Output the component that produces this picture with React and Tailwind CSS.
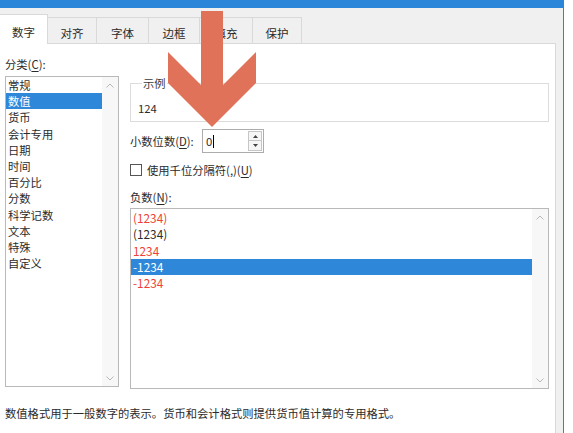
const tabs = [
  { label: "数字", w: "w-[48px]", active: true },
  { label: "对齐", w: "w-[49px]" },
  { label: "字体", w: "w-[52px]" },
  { label: "边框", w: "w-[51px]" },
  { label: "填充", w: "w-[53px]" },
  { label: "保护", w: "w-[49px]" },
];

const categories = [
  "常规",
  "数值",
  "货币",
  "会计专用",
  "日期",
  "时间",
  "百分比",
  "分数",
  "科学记数",
  "文本",
  "特殊",
  "自定义",
];

const negatives = [
  { text: "(1234)", red: true },
  { text: "(1234)" },
  { text: "1234", red: true },
  { text: "-1234", selected: true },
  { text: "-1234", red: true },
];

function Chevron({ up }) {
  return (
    <svg width="8" height="5" viewBox="0 0 8 5">
      <polyline
        points={up ? "0.5,4.5 4,1 7.5,4.5" : "0.5,0.5 4,4 7.5,0.5"}
        fill="none"
        stroke="#b8b8b8"
        strokeWidth="1"
      />
    </svg>
  );
}

function ScrollBar() {
  return (
    <div className="w-[16px] bg-[#f7f7f7] flex flex-col justify-between">
      <div className="h-[16px] flex items-center justify-center">
        <Chevron up />
      </div>
      <div className="h-[16px] flex items-center justify-center">
        <Chevron />
      </div>
    </div>
  );
}

function Key({ children }) {
  return <span className="underline underline-offset-2">{children}</span>;
}

export default function App() {
  return (
    <div className="w-[573px] h-[433px] bg-white flex overflow-hidden relative text-[#2b2b2b] font-['Noto_Sans_CJK_SC','Noto_Sans',sans-serif] text-[11.3px] leading-[16px]">
      <div className="w-[564px] flex flex-col bg-[#f0f0f0] border-r border-[#2b86d9]">
        {/* title bar edge */}
        <div className="h-[8px] bg-[#2b86d9]" />

        {/* tabs */}
        <div className="h-[35px] flex items-end">
          {tabs.map((t) =>
            t.active ? (
              <div
                key={t.label}
                className={`${t.w} h-[30px] -mb-px relative z-10 bg-white border-r border-t border-[#d9d9d9] flex justify-center pt-[9px] text-[11.5px]`}
              >
                {t.label}
              </div>
            ) : (
              <div
                key={t.label}
                className={`${t.w} h-[26px] border-r border-t border-[#d9d9d9] flex justify-center pt-[7px] text-[11.5px]`}
              >
                {t.label}
              </div>
            )
          )}
        </div>

        {/* panel */}
        <div className="flex-1 flex">
          <div className="w-[556px] bg-white border-t border-r border-[#d9d9d9] flex flex-col">
            <div className="flex items-start">
              {/* category */}
              <div className="ml-[5px] w-[114px] pt-[12px] flex flex-col">
                <div>
                  分类(<Key>C</Key>):
                </div>
                <div className="mt-[4px] h-[311px] border border-[#b9b9b9] flex">
                  <div className="flex-1 flex flex-col">
                    {categories.map((c) => (
                      <div
                        key={c}
                        className={`h-[16.2px] pl-[2px] flex items-center ${
                          c === "数值" ? "bg-[#2f87d9] text-white" : ""
                        }`}
                      >
                        {c}
                      </div>
                    ))}
                  </div>
                  <ScrollBar />
                </div>
              </div>

              {/* right side */}
              <div className="ml-[11px] w-[419px] pt-[31px] flex flex-col">
                <fieldset className="border border-[#dcdcdc] pl-[7px] pt-[9px] pb-[5px]">
                  <legend className="ml-[4px] px-[1px] text-[#3a3a3a]">示例</legend>
                  <div>124</div>
                </fieldset>

                <div className="mt-[7px] flex items-center">
                  <div className="w-[72px]">
                    小数位数(<Key>D</Key>):
                  </div>
                  <div className="w-[62px] h-[24px] border border-[#acacac] flex items-center">
                    <div className="flex-1 flex items-center pl-[3px]">
                      <span>0</span>
                      <span className="w-px h-[13px] bg-black ml-px" />
                    </div>
                    <div className="w-[14px] mr-px flex flex-col">
                      <div className="h-[10px] border border-[#c6c6c6] bg-[#f6f6f6] flex items-center justify-center">
                        <svg width="5" height="3" viewBox="0 0 5 3">
                          <polygon points="0,3 2.5,0 5,3" fill="#444" />
                        </svg>
                      </div>
                      <div className="h-[10px] border border-t-0 border-[#c6c6c6] bg-[#f6f6f6] flex items-center justify-center">
                        <svg width="5" height="3" viewBox="0 0 5 3">
                          <polygon points="0,0 2.5,3 5,0" fill="#444" />
                        </svg>
                      </div>
                    </div>
                  </div>
                </div>

                <div className="mt-[9px] h-[16px] flex items-center gap-[5px]">
                  <div className="w-[12px] h-[12px] border border-[#555] bg-white" />
                  <div>
                    使用千位分隔符(,)(<Key>U</Key>)
                  </div>
                </div>

                <div className="mt-[11px]">
                  负数(<Key>N</Key>):
                </div>

                <div className="mt-[3px] h-[181px] border border-[#b9b9b9] flex">
                  <div className="flex-1 flex flex-col pt-px">
                    {negatives.map((n, i) => (
                      <div
                        key={i}
                        className={`h-[16.25px] pl-[2px] flex items-center text-[11.8px] ${
                          n.selected
                            ? "bg-[#2f87d9] text-white"
                            : n.red
                            ? "text-[#ef4136]"
                            : ""
                        }`}
                      >
                        {n.text}
                      </div>
                    ))}
                  </div>
                  <ScrollBar />
                </div>
              </div>
            </div>

            <div className="mt-[16px] pl-[5px]">
              数值格式用于一般数字的表示。货币和会计格式则提供货币值计算的专用格式。
            </div>
          </div>
          <div className="flex-1" />
        </div>
      </div>

      {/* annotation arrow */}
      <svg
        className="absolute left-0 top-0 pointer-events-none"
        width="573"
        height="433"
        viewBox="0 0 573 433"
      >
        <polygon
          points="201,11 223,11 223,85 256,52 256,83 212,127 168,83 168,52 201,85"
          fill="#df7258"
        />
      </svg>
    </div>
  );
}
